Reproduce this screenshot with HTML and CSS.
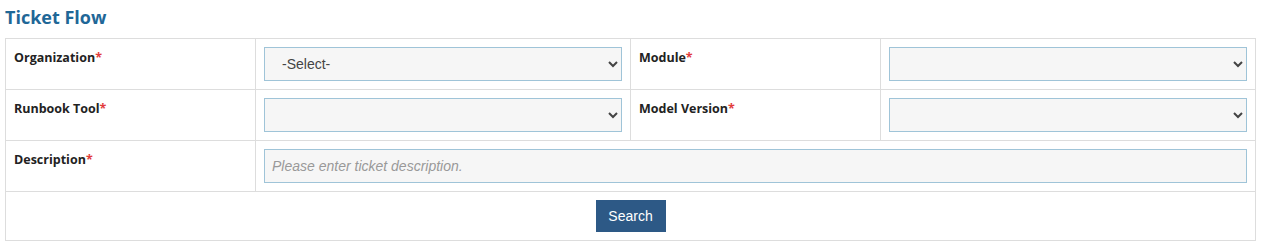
FILE: index.html
```html
<!DOCTYPE html>
<html lang="en">
<head>
  <meta charset="UTF-8">
  <title>Ticket Flow</title>
  <link rel="stylesheet" href="styles.css">
</head>
<body>
  <h2 class="page-title">Ticket Flow</h2>
  <table class="form-table">
    <colgroup>
      <col class="col-lbl">
      <col class="col-fld">
      <col class="col-lbl">
      <col class="col-fld">
    </colgroup>
    <tr>
      <td class="lbl">Organization<span class="req">*</span></td>
      <td>
        <select class="field">
          <option>-Select-</option>
        </select>
      </td>
      <td class="lbl">Module<span class="req">*</span></td>
      <td><select class="field"><option></option></select></td>
    </tr>
    <tr>
      <td class="lbl">Runbook Tool<span class="req">*</span></td>
      <td><select class="field"><option></option></select></td>
      <td class="lbl">Model Version<span class="req">*</span></td>
      <td><select class="field"><option></option></select></td>
    </tr>
    <tr>
      <td class="lbl">Description<span class="req">*</span></td>
      <td colspan="3"><input type="text" class="field" placeholder="Please enter ticket description."></td>
    </tr>
    <tr>
      <td colspan="4" class="actions"><button class="btn">Search</button></td>
    </tr>
  </table>
</body>
</html>
```

FILE: styles.css
```css
body {
  margin: 5px;
  font-family: "Open Sans", Arial, sans-serif;
  color: #333;
  background: #fff;
}

.page-title {
  margin: 0 0 10px 0;
  padding-top: 1px;
  font-size: 18px;
  font-weight: bold;
  color: #1f6797;
  line-height: 22px;
}

.form-table {
  width: 1251px;
  border-collapse: collapse;
  table-layout: fixed;
}

.col-lbl {
  width: 250px;
}

.col-fld {
  width: 375px;
}

.form-table td {
  border: 1px solid #dddddd;
  padding: 8px;
  vertical-align: top;
}

.form-table td.lbl {
  font-size: 12.5px;
  font-weight: bold;
  color: #222;
  line-height: 19px;
  padding-top: 9px;
  padding-bottom: 7px;
}

.req {
  color: #e23c3c;
}

.field {
  display: block;
  width: 100%;
  height: 34px;
  box-sizing: border-box;
  border: 1px solid #9fc4d8;
  background-color: #f6f6f6;
  font-family: "Liberation Sans", Arial, sans-serif;
  font-size: 14px;
  color: #444;
  padding: 0 12px;
  border-radius: 0;
  margin: 0;
}

select.field {
  padding: 0 12px 0 13px;
}

input.field {
  padding: 0 7px;
}

input.field::placeholder {
  color: #999;
  font-style: italic;
}

.actions {
  text-align: center;
}

.btn {
  font-family: "Liberation Sans", Arial, sans-serif;
  font-size: 14px;
  background-color: #2d5986;
  color: white;
  border: none;
  width: 70px;
  height: 32px;
  cursor: pointer;
}
```
